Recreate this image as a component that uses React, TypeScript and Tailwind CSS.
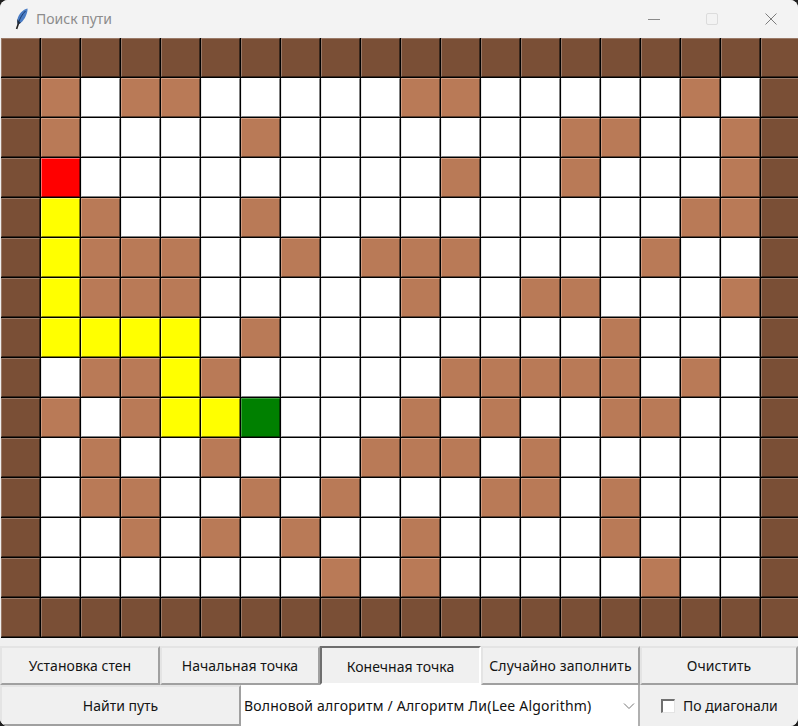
const ROWS = [
  "####################",
  "#b.bb.....bb.....b.#",
  "#b....b.......bb..b#",
  "#R.........b..b...b#",
  "#Yb...b..........bb#",
  "#Ybbb..b.bbb....b..#",
  "#Ybbb.....b..bb...b#",
  "#YYYY.b........b...#",
  "#.bbYb.....bbbbb.b.#",
  "#b.bYYG...b.b..bb..#",
  "#.b..b...bbb.b.....#",
  "#.bb..b.b...bb.b...#",
  "#..b.b.b..b....b...#",
  "#.......b.b.....b..#",
  "####################",
];

const CELL: Record<string, string> = {
  "#": "bg-[#7a4f36] border-t-[#9a7a68] border-l-[#9a7a68] border-r-[#3a261a] border-b-[#3a261a]",
  b: "bg-[#b97a57] border-t-[#d8a387] border-l-[#cf9a7d] border-r-[#5e3e2c] border-b-[#5e3e2c]",
  ".": "bg-white border-t-white border-l-[#e8e8e8] border-r-[#808080] border-b-[#808080]",
  R: "bg-[#ff0000] border-t-[#ff6a6a] border-l-[#ff6a6a] border-r-[#800000] border-b-[#800000]",
  Y: "bg-[#ffff00] border-t-[#ffff70] border-l-[#ffff70] border-r-[#808000] border-b-[#808000]",
  G: "bg-[#008000] border-t-[#3f9f3f] border-l-[#3f9f3f] border-r-[#004000] border-b-[#004000]",
};

function Cell({ kind }: { kind: string }) {
  return (
    <div className="h-10 w-10 shrink-0 border-r border-b border-r-black border-b-black bg-black">
      <div className={`h-[39px] w-[39px] border ${CELL[kind]}`} />
    </div>
  );
}

function Btn({ label, className = "", sunken = false }: { label: string; className?: string; sunken?: boolean }) {
  return (
    <div
      className={`flex shrink-0 items-center justify-center bg-[#f0f0f0] text-[14px] text-[#141414] ${
        sunken
          ? "border-t-2 border-l-2 border-t-[#6e6e6e] border-l-[#6e6e6e] border-r-2 border-b-2 border-r-white border-b-white"
          : "border-t-2 border-l-2 border-t-[#e4e4e4] border-l-[#e4e4e4] border-r-2 border-b-2 border-r-[#a0a0a0] border-b-[#a0a0a0]"
      } ${className}`}
    >
      {label}
    </div>
  );
}

function Feather() {
  return (
    <svg width="14" height="22" viewBox="0 0 14 22" className="shrink-0">
      <path d="M12.5 0.5 C8 1.5 3.5 6 2.5 11 C2 13.5 2.3 15.5 3 16.5 C6 15.5 9.5 11.5 11 7.5 C12 5 12.8 2.5 12.5 0.5Z" fill="#4a7cc4" />
      <path d="M10.5 3 C7.5 6 5 10 3.8 14" stroke="#173a70" strokeWidth="1" fill="none" />
      <path d="M3.4 15.5 L1.6 21" stroke="#222" strokeWidth="1.6" fill="none" />
      <path d="M2.5 11 C2 13.5 2.3 15.5 3 16.5 C4 16 5 15.4 6 14.4 C4.5 14.4 3.4 13 2.5 11Z" fill="#222c3a" />
    </svg>
  );
}

export default function App() {
  return (
    <div className="h-[726px] w-[798px] overflow-hidden bg-[#1f1f1f] font-['Noto_Sans',sans-serif]">
      <div className="flex h-full w-full flex-col overflow-hidden rounded-[8px] bg-[#f0f0f0]">
        <header className="flex h-[38px] shrink-0 items-center bg-[#f3f3f3]">
          <div className="ml-[15px] flex w-[21px] items-center">
            <Feather />
          </div>
          <span className="-mt-[2px] text-[14px] text-[#8c8c8c]">Поиск пути</span>
          <div className="ml-auto flex items-center">
            <svg width="12" height="12" viewBox="0 0 12 12" className="mr-[46px]">
              <path d="M0 6.5H12" stroke="#8a8a8a" strokeWidth="1" />
            </svg>
            <svg width="13" height="13" viewBox="0 0 13 13" className="mr-[46px]">
              <rect x="0.5" y="0.5" width="11" height="11" rx="1.5" fill="none" stroke="#dcdcdc" strokeWidth="1" />
            </svg>
            <svg width="12" height="12" viewBox="0 0 12 12" className="mr-[21px]">
              <path d="M0.5 0.5L11.5 11.5M11.5 0.5L0.5 11.5" stroke="#7c7c7c" strokeWidth="1" />
            </svg>
          </div>
        </header>

        <main className="shrink-0 overflow-hidden pl-px">
          {ROWS.map((row, r) => (
            <div key={r} className="flex w-[801px]">
              {row.split("").map((c, i) => (
                <Cell key={i} kind={c} />
              ))}
            </div>
          ))}
        </main>

        <footer className="flex min-h-0 flex-1 flex-col pt-[8px]">
          <div className="flex h-[39px] shrink-0">
            <Btn label="Установка стен" className="w-[160px] tracking-[0.03px]" />
            <Btn label="Начальная точка" className="w-[160px] tracking-[0.03px]" />
            <Btn label="Конечная точка" className="w-[161px] pt-[2px] tracking-[0.03px]" sunken />
            <Btn label="Случайно заполнить" className="w-[159px] tracking-[0.1px]" />
            <Btn label="Очистить" className="w-[158px] tracking-[0.1px]" />
          </div>
          <div className="flex h-[41px] shrink-0">
            <Btn label="Найти путь" className="h-full w-[241px]" />
            <div className="flex h-full w-[399px] shrink-0 items-center border-r-2 border-r-[#b0b0b0] bg-white pl-[3px] text-[14px] text-[#111]">
              <span className="whitespace-nowrap tracking-[0.22px]">Волновой алгоритм / Алгоритм Ли(Lee Algorithm)</span>
              <svg width="12" height="8" viewBox="0 0 12 8" className="ml-auto mr-[3px]">
                <path d="M1 1.5L6 6.5L11 1.5" stroke="#777" strokeWidth="1" fill="none" />
              </svg>
            </div>
            <div className="flex h-full flex-1 items-center bg-[#f0f0f0] pl-[21px]">
              <span className="h-[14px] w-[14px] shrink-0 border-t-2 border-l-2 border-r border-b border-t-[#707070] border-l-[#707070] border-r-[#e4e4e4] border-b-[#e4e4e4] bg-white" />
              <span className="ml-[8px] text-[14px] text-[#141414]">По диагонали</span>
            </div>
          </div>
        </footer>
      </div>
    </div>
  );
}
